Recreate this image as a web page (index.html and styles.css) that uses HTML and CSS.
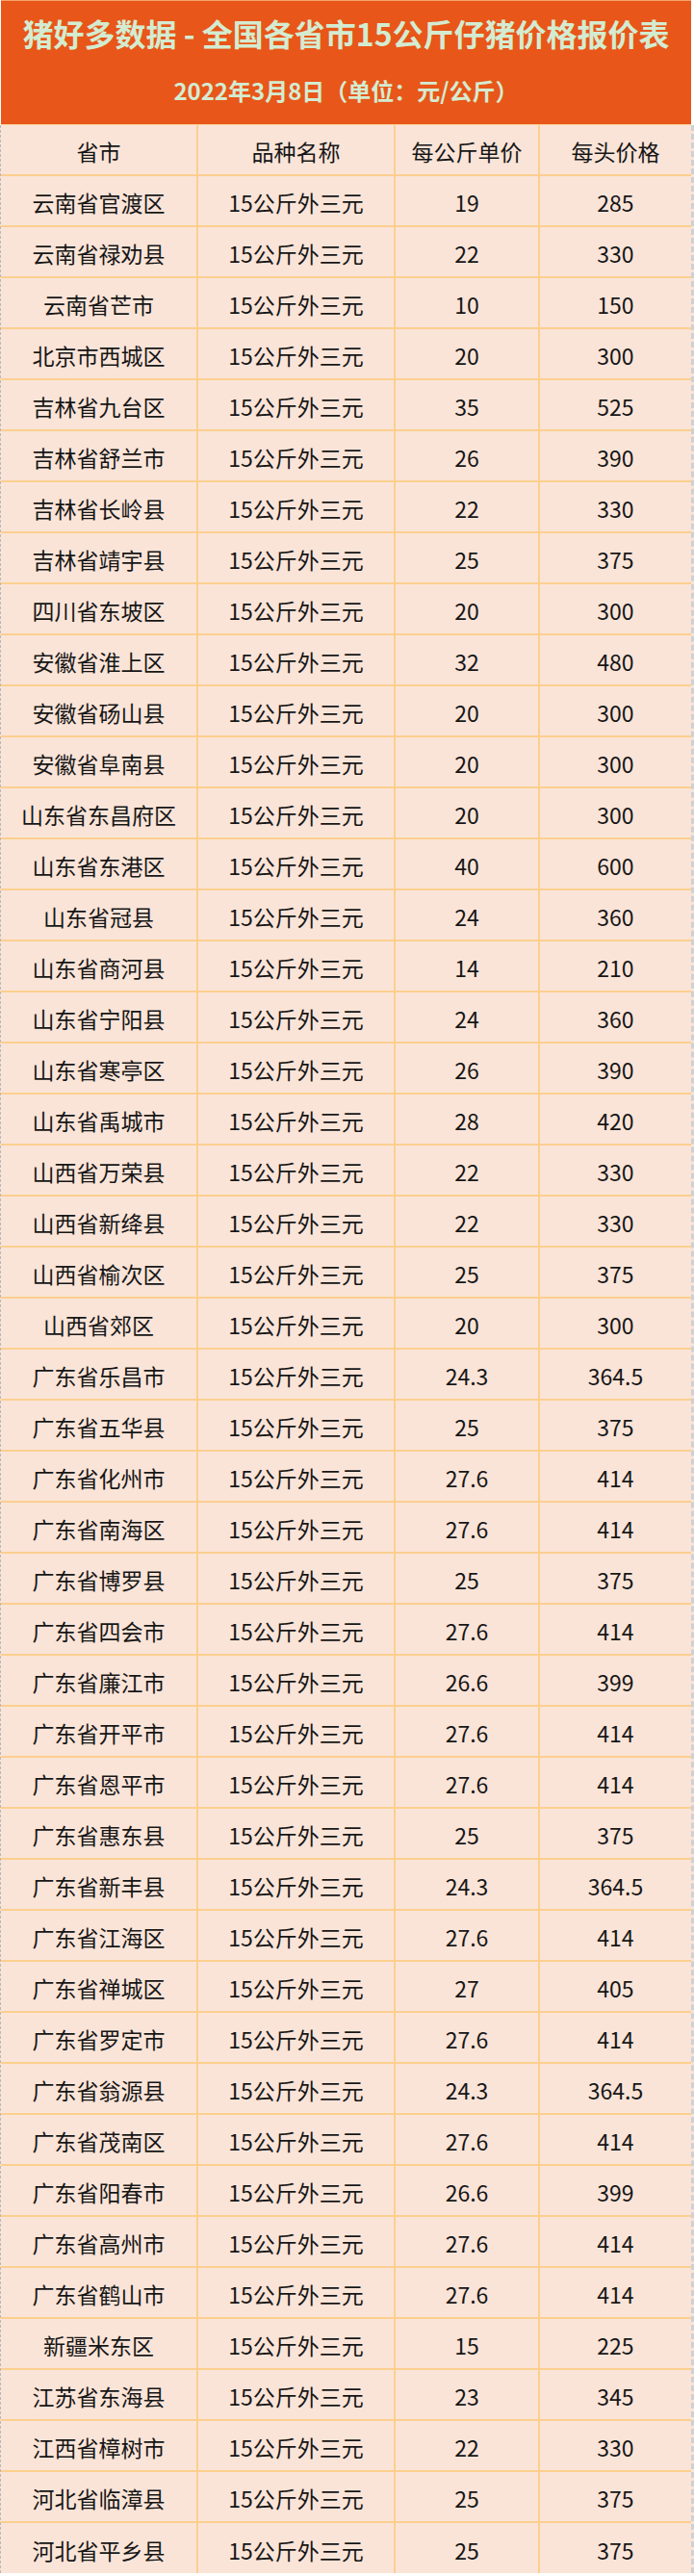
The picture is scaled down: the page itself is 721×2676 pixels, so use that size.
FILE: index.html
```html
<!DOCTYPE html>
<html lang="zh-CN">
<head>
<meta charset="utf-8">
<title>猪好多数据</title>
<link rel="stylesheet" href="styles.css">
</head>
<body>
<div class="page">
  <header class="banner">
    <h1 class="title">猪好多数据 - 全国各省市15公斤仔猪价格报价表</h1>
    <p class="subtitle">2022年3月8日（单位：元/公斤）</p>
  </header>
  <div class="sheet">
    <table class="prices">
      <colgroup>
        <col class="c1"><col class="c2"><col class="c3"><col class="c4">
      </colgroup>
      <thead>
        <tr><th>省市</th><th>品种名称</th><th>每公斤单价</th><th>每头价格</th></tr>
      </thead>
      <tbody>
        <tr><td>云南省官渡区</td><td>15公斤外三元</td><td>19</td><td>285</td></tr>
        <tr><td>云南省禄劝县</td><td>15公斤外三元</td><td>22</td><td>330</td></tr>
        <tr><td>云南省芒市</td><td>15公斤外三元</td><td>10</td><td>150</td></tr>
        <tr><td>北京市西城区</td><td>15公斤外三元</td><td>20</td><td>300</td></tr>
        <tr><td>吉林省九台区</td><td>15公斤外三元</td><td>35</td><td>525</td></tr>
        <tr><td>吉林省舒兰市</td><td>15公斤外三元</td><td>26</td><td>390</td></tr>
        <tr><td>吉林省长岭县</td><td>15公斤外三元</td><td>22</td><td>330</td></tr>
        <tr><td>吉林省靖宇县</td><td>15公斤外三元</td><td>25</td><td>375</td></tr>
        <tr><td>四川省东坡区</td><td>15公斤外三元</td><td>20</td><td>300</td></tr>
        <tr><td>安徽省淮上区</td><td>15公斤外三元</td><td>32</td><td>480</td></tr>
        <tr><td>安徽省砀山县</td><td>15公斤外三元</td><td>20</td><td>300</td></tr>
        <tr><td>安徽省阜南县</td><td>15公斤外三元</td><td>20</td><td>300</td></tr>
        <tr><td>山东省东昌府区</td><td>15公斤外三元</td><td>20</td><td>300</td></tr>
        <tr><td>山东省东港区</td><td>15公斤外三元</td><td>40</td><td>600</td></tr>
        <tr><td>山东省冠县</td><td>15公斤外三元</td><td>24</td><td>360</td></tr>
        <tr><td>山东省商河县</td><td>15公斤外三元</td><td>14</td><td>210</td></tr>
        <tr><td>山东省宁阳县</td><td>15公斤外三元</td><td>24</td><td>360</td></tr>
        <tr><td>山东省寒亭区</td><td>15公斤外三元</td><td>26</td><td>390</td></tr>
        <tr><td>山东省禹城市</td><td>15公斤外三元</td><td>28</td><td>420</td></tr>
        <tr><td>山西省万荣县</td><td>15公斤外三元</td><td>22</td><td>330</td></tr>
        <tr><td>山西省新绛县</td><td>15公斤外三元</td><td>22</td><td>330</td></tr>
        <tr><td>山西省榆次区</td><td>15公斤外三元</td><td>25</td><td>375</td></tr>
        <tr><td>山西省郊区</td><td>15公斤外三元</td><td>20</td><td>300</td></tr>
        <tr><td>广东省乐昌市</td><td>15公斤外三元</td><td>24.3</td><td>364.5</td></tr>
        <tr><td>广东省五华县</td><td>15公斤外三元</td><td>25</td><td>375</td></tr>
        <tr><td>广东省化州市</td><td>15公斤外三元</td><td>27.6</td><td>414</td></tr>
        <tr><td>广东省南海区</td><td>15公斤外三元</td><td>27.6</td><td>414</td></tr>
        <tr><td>广东省博罗县</td><td>15公斤外三元</td><td>25</td><td>375</td></tr>
        <tr><td>广东省四会市</td><td>15公斤外三元</td><td>27.6</td><td>414</td></tr>
        <tr><td>广东省廉江市</td><td>15公斤外三元</td><td>26.6</td><td>399</td></tr>
        <tr><td>广东省开平市</td><td>15公斤外三元</td><td>27.6</td><td>414</td></tr>
        <tr><td>广东省恩平市</td><td>15公斤外三元</td><td>27.6</td><td>414</td></tr>
        <tr><td>广东省惠东县</td><td>15公斤外三元</td><td>25</td><td>375</td></tr>
        <tr><td>广东省新丰县</td><td>15公斤外三元</td><td>24.3</td><td>364.5</td></tr>
        <tr><td>广东省江海区</td><td>15公斤外三元</td><td>27.6</td><td>414</td></tr>
        <tr><td>广东省禅城区</td><td>15公斤外三元</td><td>27</td><td>405</td></tr>
        <tr><td>广东省罗定市</td><td>15公斤外三元</td><td>27.6</td><td>414</td></tr>
        <tr><td>广东省翁源县</td><td>15公斤外三元</td><td>24.3</td><td>364.5</td></tr>
        <tr><td>广东省茂南区</td><td>15公斤外三元</td><td>27.6</td><td>414</td></tr>
        <tr><td>广东省阳春市</td><td>15公斤外三元</td><td>26.6</td><td>399</td></tr>
        <tr><td>广东省高州市</td><td>15公斤外三元</td><td>27.6</td><td>414</td></tr>
        <tr><td>广东省鹤山市</td><td>15公斤外三元</td><td>27.6</td><td>414</td></tr>
        <tr><td>新疆米东区</td><td>15公斤外三元</td><td>15</td><td>225</td></tr>
        <tr><td>江苏省东海县</td><td>15公斤外三元</td><td>23</td><td>345</td></tr>
        <tr><td>江西省樟树市</td><td>15公斤外三元</td><td>22</td><td>330</td></tr>
        <tr><td>河北省临漳县</td><td>15公斤外三元</td><td>25</td><td>375</td></tr>
        <tr><td>河北省平乡县</td><td>15公斤外三元</td><td>25</td><td>375</td></tr>
      </tbody>
    </table>
  </div>
</div>
</body>
</html>
```
FILE: styles.css
```css
html, body {
  margin: 0;
  padding: 0;
  background: #ffffff;
}

.page {
  width: 721px;
  font-family: "Noto Sans CJK SC", "Noto Sans", sans-serif;
}

.banner {
  box-sizing: border-box;
  height: 130px;
  margin: 0 3px 0 1px;
  background: #e8561a;
  border-top: 1px solid #f3a36f;
  border-bottom: 1px solid #fbd39a;
  display: flex;
  flex-direction: column;
  align-items: center;
  padding-top: 13px;
}

.title {
  margin: 0;
  font-size: 32px;
  line-height: 40px;
  font-weight: 700;
  color: #d3ecd1;
  white-space: nowrap;
}

.subtitle {
  margin: 25px 0 0;
  font-size: 24px;
  line-height: 30px;
  font-weight: 700;
  color: #d3ecd1;
  white-space: nowrap;
}

.sheet {
  width: 717px;
  border-left: 1px dashed #b9b9b9;
  border-right: 3px dashed #d0d0d0;
  background: #fae4d8;
}

.prices {
  width: 717px;
  table-layout: fixed;
  border-collapse: collapse;
  background: #fae4d8;
  color: #161616;
}

.c1 { width: 204px; }
.c2 { width: 205px; }
.c3 { width: 150px; }
.c4 { width: 158px; }

.prices th,
.prices td {
  box-sizing: border-box;
  height: 53px;
  padding: 3px 0 0;
  text-align: center;
  vertical-align: middle;
  font-size: 23px;
  font-weight: 400;
  line-height: 28px;
  border: 2px solid #fccf8e;
  white-space: nowrap;
}

.prices thead th {
  border-top: none;
  height: 52px;
}

.prices th:first-child,
.prices td:first-child {
  border-left: none;
}

.prices th:last-child,
.prices td:last-child {
  border-right: none;
}

.prices tbody tr:last-child td {
  border-bottom: none;
}
```
